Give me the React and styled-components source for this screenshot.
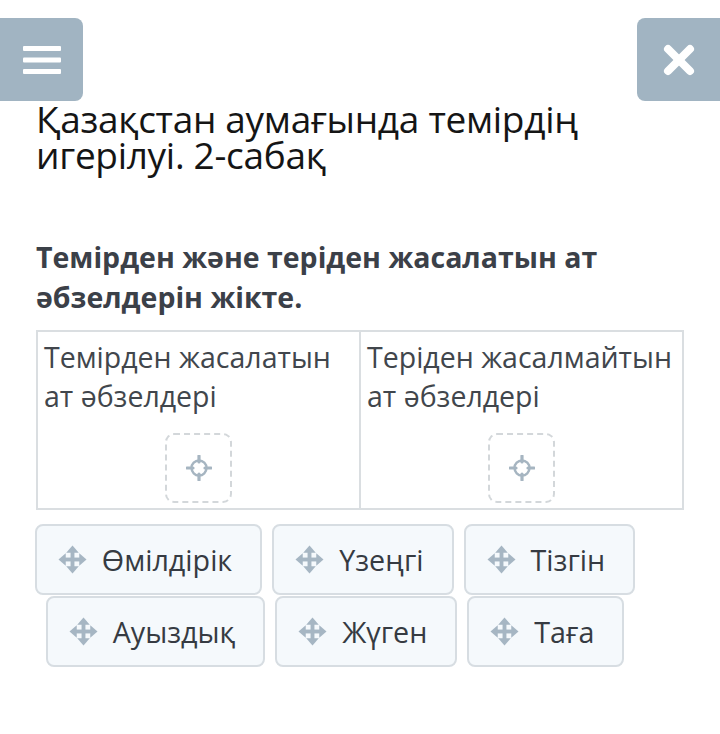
import React from 'react'
import styled, { createGlobalStyle } from 'styled-components'

const GlobalStyle = createGlobalStyle`
  html, body {
    margin: 0;
    padding: 0;
    background: #ffffff;
  }
  body {
    font-family: "Open Sans", "Noto Sans", sans-serif;
  }
`

const Page = styled.div`
  width: 720px;
  min-height: 734px;
  padding-top: 18px;
  box-sizing: border-box;
`

const TopBar = styled.div`
  display: flex;
  justify-content: space-between;
  height: 83px;
`

const IconButton = styled.button`
  width: 83px;
  height: 83px;
  border: 0;
  padding: 0;
  border-radius: ${(p) => (p.left ? '0 8px 8px 0' : '8px 0 0 8px')};
  background: #a1b4c2;
  display: flex;
  align-items: center;
  justify-content: center;
`

const Content = styled.div`
  padding: 0 36px;
`

const Title = styled.h1`
  margin: 0;
  font-weight: 400;
  font-size: 37px;
  line-height: 36px;
  color: #151515;
  letter-spacing: -0.3px;
`

const Question = styled.h2`
  margin: 64px 0 0;
  font-weight: 700;
  font-size: 28.5px;
  line-height: 40px;
  color: #3b4048;
`

const Table = styled.div`
  margin-top: 13px;
  display: grid;
  grid-template-columns: 321px 1fr;
  border: 2px solid #dadee1;
  width: 648px;
  box-sizing: border-box;
  height: 180px;
`

const Cell = styled.div`
  display: flex;
  flex-direction: column;
  align-items: center;
  padding: 6px 6px 6px;
  border-left: ${(p) => (p.divided ? '2px solid #dadee1' : '0')};
`

const CellTitle = styled.div`
  align-self: stretch;
  font-size: 28.5px;
  line-height: 39px;
  color: #41464c;
`

const DropZone = styled.div`
  margin-top: 17px;
  width: 67px;
  height: 70px;
  box-sizing: border-box;
  border: 2px dashed #d3d7da;
  border-radius: 9px;
  display: flex;
  align-items: center;
  justify-content: center;
`

const Chips = styled.div`
  margin: 14px 0 0 -5px;
  width: 608px;
  display: flex;
  flex-wrap: wrap;
  justify-content: center;
  column-gap: 10px;
  row-gap: 1px;
`

const Chip = styled.div`
  display: flex;
  align-items: center;
  gap: 15px;
  height: 71px;
  box-sizing: border-box;
  padding: 0 28px 0 21px;
  background: #f5f9fc;
  border: 2px solid #d7dde2;
  border-radius: 8px;
  font-size: 28.7px;
  color: #363b42;
`

const MoveIcon = () => (
  <svg width="29" height="29" viewBox="0 0 30 30" fill="#a6b6c3">
    <rect x="13" y="5" width="4" height="20" />
    <rect x="5" y="13" width="20" height="4" />
    <polygon points="15,0.5 8.5,8 21.5,8" />
    <polygon points="15,29.5 8.5,22 21.5,22" />
    <polygon points="0.5,15 8,8.5 8,21.5" />
    <polygon points="29.5,15 22,8.5 22,21.5" />
  </svg>
)

const TargetIcon = () => (
  <svg width="26" height="26" viewBox="0 0 26 26" fill="none" stroke="#a6b5c1">
    <circle cx="13" cy="13" r="7.5" strokeWidth="2.4" />
    <line x1="13" y1="1" x2="13" y2="7" strokeWidth="3.2" strokeLinecap="round" />
    <line x1="13" y1="19" x2="13" y2="25" strokeWidth="3.2" strokeLinecap="round" />
    <line x1="1" y1="13" x2="7" y2="13" strokeWidth="3.2" strokeLinecap="round" />
    <line x1="19" y1="13" x2="25" y2="13" strokeWidth="3.2" strokeLinecap="round" />
  </svg>
)

const MenuIcon = () => (
  <svg width="38" height="30" viewBox="0 0 38 30" fill="#ffffff">
    <rect x="0" y="1" width="38" height="5" rx="1" />
    <rect x="0" y="12.5" width="38" height="5" rx="1" />
    <rect x="0" y="24" width="38" height="5" rx="1" />
  </svg>
)

const CloseIcon = () => (
  <svg width="32" height="32" viewBox="0 0 32 32" stroke="#ffffff" strokeWidth="8" strokeLinecap="round">
    <line x1="5" y1="5" x2="27" y2="27" />
    <line x1="27" y1="5" x2="5" y2="27" />
  </svg>
)

const items = ['Өмілдірік', 'Үзеңгі', 'Тізгін', 'Ауыздық', 'Жүген', 'Таға']

export default function App() {
  return (
    <Page>
      <GlobalStyle />
      <TopBar>
        <IconButton left>
          <MenuIcon />
        </IconButton>
        <IconButton>
          <CloseIcon />
        </IconButton>
      </TopBar>
      <Content>
        <Title>Қазақстан аумағында темірдің игерілуі. 2-сабақ</Title>
        <Question>Темірден және теріден жасалатын ат әбзелдерін жікте.</Question>
        <Table>
          <Cell>
            <CellTitle>Темірден жасалатын ат әбзелдері</CellTitle>
            <DropZone>
              <TargetIcon />
            </DropZone>
          </Cell>
          <Cell divided>
            <CellTitle>Теріден жасалмайтын ат әбзелдері</CellTitle>
            <DropZone>
              <TargetIcon />
            </DropZone>
          </Cell>
        </Table>
        <Chips>
          {items.map((text) => (
            <Chip key={text}>
              <MoveIcon />
              {text}
            </Chip>
          ))}
        </Chips>
      </Content>
    </Page>
  )
}
